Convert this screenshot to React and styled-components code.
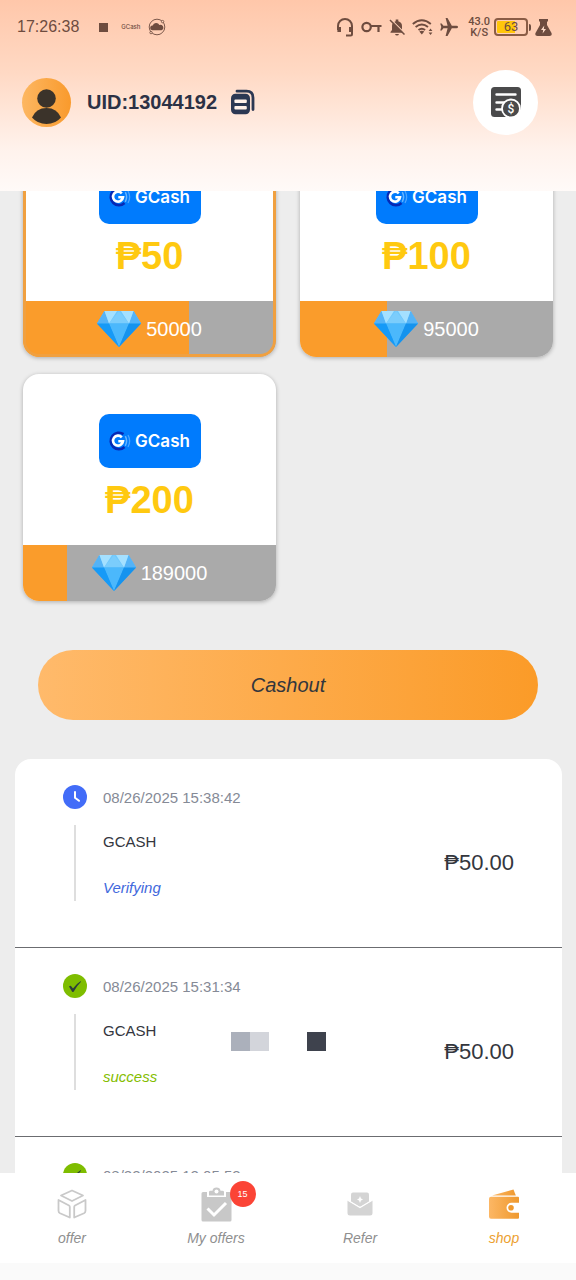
import React, { useLayoutEffect, useRef } from "react";
import styled, { createGlobalStyle, css } from "styled-components";

const GlobalStyle = createGlobalStyle`
  *, *::before, *::after { box-sizing: border-box; }
  body { margin: 0; background: #ededed; }
  button { font: inherit; color: inherit; border: 0; padding: 0; background: none; cursor: pointer; }
  svg { display: block; flex: none; }
`;

const sans = '"Liberation Sans", Arial, sans-serif';

const Screen = styled.div`
  display: flex;
  flex-direction: column;
  height: 100vh;
  font-family: ${sans};
  color: #33363d;
`;

/* ---------- header ---------- */

const Header = styled.header`
  flex: none;
  padding-bottom: 57px;
  background: linear-gradient(#ffc7aa 0%, #ffd9c4 38%, #fff2ec 78%, #fffaf8 100%);
`;

const StatusBar = styled.div`
  display: flex;
  align-items: center;
  justify-content: space-between;
  height: 54px;
  padding: 0 24px 0 17px;
  color: #6e4c3f;
`;

const StatusGroup = styled.div`
  display: flex;
  align-items: center;
  gap: ${(p) => p.$gap}px;
`;

const Clock = styled.time`
  font-size: 16px;
  line-height: 24px;
`;

const StopSquare = styled.span`
  width: 9px;
  height: 9px;
  margin: 0 5px 0 12px;
  background: #6e4c3f;
`;

const TinyLabel = styled.span`
  font: 500 6px/8px Inter, sans-serif;
`;

const Speed = styled.span`
  font: 500 11px/11px Roboto, sans-serif;
  text-align: center;
`;

const Battery = styled.span`
  display: flex;
  align-items: center;
`;

const BatteryBody = styled.span`
  width: 34px;
  height: 18px;
  border: 2px solid #8a5c45;
  border-radius: 4px;
  background: linear-gradient(90deg, #ffc60a 64%, transparent 64%);
  background-clip: content-box;
  padding: 1px;
  font: 400 13px/12px Roboto, sans-serif;
  text-align: center;
`;

const BatteryTip = styled.span`
  width: 2px;
  height: 7px;
  margin-left: 1px;
  border-radius: 0 2px 2px 0;
  background: #6e4c3f;
`;

const Account = styled.div`
  display: flex;
  align-items: center;
  height: 80px;
  padding: 16px 38px 0 22px;
`;

const Avatar = styled.span`
  width: 49px;
  height: 49px;
  border-radius: 50%;
  overflow: hidden;
  background: linear-gradient(90deg, #fdb762, #f99a2c);
`;

const Uid = styled.span`
  margin: 0 14px 0 16px;
  font-size: 20px;
  line-height: 32px;
  font-weight: 700;
  color: #2c3145;
`;

const RecordsButton = styled.button`
  display: grid;
  place-items: center;
  width: 65px;
  height: 65px;
  margin-left: auto;
  border-radius: 50%;
  background: #fff;
`;

/* ---------- scrolling content ---------- */

const Content = styled.main`
  flex: 1;
  min-height: 0;
  overflow-y: auto;
  scrollbar-width: none;
  background: #ededed;
`;

const Offers = styled.section`
  display: grid;
  grid-template-columns: 1fr 1fr;
  gap: 17px 24px;
  padding: 16px 23px 0;
`;

const OfferCard = styled.button`
  position: relative;
  display: flex;
  flex-direction: column;
  align-items: stretch;
  overflow: hidden;
  border-radius: 16px;
  background: #fff;
  box-shadow: 0 1px 4px rgba(0, 0, 0, 0.28);
  ${(p) =>
    p.$selected &&
    css`
      &::after {
        content: "";
        position: absolute;
        inset: 0;
        border: 3px solid #f0a040;
        border-radius: 16px;
      }
    `}
`;

const OfferTop = styled.span`
  display: flex;
  flex-direction: column;
  align-items: center;
  height: 171px;
  padding-top: 40px;
`;

const LogoTile = styled.span`
  display: flex;
  align-items: center;
  justify-content: center;
  gap: 4px;
  width: 102px;
  height: 54px;
  border-radius: 10px;
  background: #007bfd;
  color: #fff;
  font: 600 17px/24px Inter, sans-serif;
`;

const Price = styled.span`
  margin-top: 8px;
  font-size: 38px;
  line-height: 48px;
  font-weight: 700;
  color: #ffc910;
`;

const Meter = styled.span`
  display: flex;
  align-items: center;
  justify-content: center;
  gap: 5px;
  height: 56px;
  font-size: 20px;
  line-height: 32px;
  color: #fff;
  background: linear-gradient(90deg, #fa9c2b var(--fill), #aaaaaa var(--fill));
`;

const CashoutButton = styled.button`
  display: block;
  width: calc(100% - 76px);
  height: 70px;
  margin: 49px 38px 39px;
  border-radius: 35px;
  background: linear-gradient(90deg, #ffba6b, #fb9b28);
  font: italic 20px/24px ${sans};
  color: #33363d;
`;

const History = styled.section`
  margin: 0 14px 0 15px;
  border-radius: 16px;
  background: #fff;
`;

const Entry = styled.article`
  padding: 26px 48px 46px;
  border-bottom: 1px solid #6b6c70;
`;

const EntryHead = styled.div`
  display: flex;
  align-items: center;
  gap: 16px;
  height: 24px;
  font-size: 15px;
  color: #858a96;
`;

const EntryBody = styled.div`
  display: flex;
  align-items: stretch;
  height: 76px;
  margin: 16px 0 0 11px;
  padding-left: 27px;
  border-left: 2px solid #dedede;
`;

const EntryText = styled.div`
  display: flex;
  flex-direction: column;
  gap: 22px;
  padding-top: 5px;
  width: 128px;
`;

const Method = styled.span`
  font-size: 15px;
  line-height: 24px;
`;

const Status = styled.span`
  font: italic 15px/24px ${sans};
  color: ${(p) => (p.$done ? "#84bd00" : "#4168dc")};
`;

const Redacted = styled.span`
  display: flex;
  align-self: center;
  margin-top: -22px;
`;

const Block = styled.i`
  width: 19px;
  height: 19px;
  background: ${(p) => p.$tone};
`;

const Amount = styled.span`
  align-self: center;
  margin-left: auto;
  font-size: 22px;
  line-height: 32px;
`;

/* ---------- bottom navigation ---------- */

const Nav = styled.nav`
  flex: none;
  display: grid;
  grid-template-columns: repeat(4, 1fr);
  padding: 13px 0 17px;
  height: 107px;
  background: linear-gradient(to top, #fafafa 17px, #fff 17px);
`;

const NavItem = styled.a`
  display: flex;
  flex-direction: column;
  align-items: center;
  gap: 8px;
  text-decoration: none;
  font: italic 14px/16px ${sans};
  color: ${(p) => (p.$active ? "#eca02f" : "#8f8f8f")};
`;

const NavIcon = styled.span`
  position: relative;
  display: grid;
  place-items: center;
  height: 36px;
`;

const Badge = styled.span`
  position: absolute;
  left: 29px;
  top: -5px;
  width: 26px;
  height: 26px;
  border-radius: 50%;
  background: #fb4436;
  color: #fff;
  font: 9px/26px ${sans};
  text-align: center;
`;

/* ---------- drawings ---------- */

const CloudIcon = () => (
  <svg width="18" height="18" viewBox="0 0 18 18" fill="none" stroke="currentColor">
    <circle cx="9" cy="9" r="7.8" strokeWidth="0.9" />
    <path d="M4.2 12.2a2.3 2.3 0 0 1 .5-4.6 3.6 3.6 0 0 1 6.7-.5 2.6 2.6 0 0 1 2.2 5.1z" fill="currentColor" stroke="none" />
    <circle cx="14.6" cy="3.6" r="1.2" fill="#ffd3bb" strokeWidth="0.8" />
    <circle cx="3" cy="14.6" r="1.2" fill="#ffd3bb" strokeWidth="0.8" />
  </svg>
);

const HeadsetIcon = () => (
  <svg width="18" height="20" viewBox="0 0 18 20" fill="none" stroke="currentColor" strokeWidth="2">
    <path d="M2 13V9a7 7 0 0 1 14 0v8q0 1.500-1.500 1.500H10" />
    <path d="M3.200 10v5M14.800 10v5" strokeWidth="3.600" />
  </svg>
);

const KeyIcon = () => (
  <svg width="21" height="12" viewBox="0 0 21 12" fill="none" stroke="currentColor" strokeWidth="2.200">
    <circle cx="5.600" cy="6" r="4.200" />
    <path d="M10 5h10.500M17.500 5v6" />
  </svg>
);

const MutedBellIcon = () => (
  <svg width="16" height="18" viewBox="0 0 16 18">
    <path d="M3 8a5 5 0 0 1 3.700-4.800V1.500h2.600v1.700A5 5 0 0 1 13 8v4l1.500 2v.8h-13V14L3 12zM6 16h4q-.5 1.600-2 1.600T6 16z" fill="currentColor" />
    <path d="M1.800 1.200 15.500 15" stroke="#ffd3bb" strokeWidth="1.200" />
    <path d="m1 2 14.500 14.500" stroke="currentColor" strokeWidth="1.500" />
  </svg>
);

const WifiIcon = () => (
  <svg width="21" height="18" viewBox="0 0 21 18" fill="none" stroke="currentColor" strokeWidth="1.900">
    <path d="M.8 6q9-7.500 18 0M3.600 9q6.200-5 12.400 0M6.500 12q3.300-2.600 6.600 0" />
    <path d="m7.300 13.500 2.500 3 2.500-3q-2.500-1.500-5 0zM16.600 13l1.900-2.500 1.900 2.500zM16.600 14.500l1.900 2.500 1.900-2.500z" fill="currentColor" stroke="none" />
  </svg>
);

const PlaneIcon = () => (
  <svg width="18" height="18" viewBox="0 0 18 18" fill="currentColor">
    <path d="M18 9q0 1.200-1.500 1.200h-4.700L7.500 18H5.600l2-7.800H3.400L1.700 12.500H.2L1.300 9 .2 5.500h1.500l1.700 2.300h4.200L5.600 0h1.900l4.300 7.800h4.700Q18 7.800 18 9z" />
  </svg>
);

const FlaskIcon = () => (
  <svg width="17" height="17" viewBox="0 0 17 17">
    <path d="M4 0h9v2.500h-1V6l4.500 8q1 3-2 3h-12q-3 0-2-3L5 6V2.500H4z" fill="currentColor" />
    <path d="M9.300 6.500 6 11h2.200L7.600 14.500 11 10H8.800z" fill="#ffdcc8" />
  </svg>
);

const PersonIcon = () => (
  <svg width="49" height="49" viewBox="0 0 49 49" fill="#3b332a">
    <circle cx="24.500" cy="20.500" r="9.300" />
    <path d="M10 39.500Q14 30 24.500 30T39 39.500Q33.500 46 24.500 46T10 39.500z" />
  </svg>
);

const CopyIcon = () => (
  <svg width="24" height="26" viewBox="0 0 24 26">
    <path d="M6 2.200h9.500q6.500 0 6.500 6.500V20.500" fill="none" stroke="#2c3853" strokeWidth="2.800" strokeLinecap="round" />
    <rect x="0" y="4.800" width="19" height="20.500" rx="4.500" fill="#2c3853" />
    <rect x="3.400" y="10.500" width="12.400" height="3.400" rx="1" fill="#fff1e9" />
    <rect x="3.400" y="17" width="12.400" height="3.400" rx="1" fill="#fff1e9" />
  </svg>
);

const ReceiptIcon = () => (
  <svg width="32" height="32" viewBox="0 0 32 32">
    <rect x="1" y="1" width="30" height="30" rx="3.500" fill="#4a4a4b" />
    <path d="M6.500 8.500h19M6.500 16.500h9M6.500 23.500h6" stroke="#fff" strokeWidth="2.400" strokeLinecap="round" />
    <path d="M32 22v10H20z" fill="#fff" />
    <circle cx="21" cy="22.500" r="9" fill="#4a4a4b" stroke="#fff" strokeWidth="1.800" />
    <text x="21" y="27" textAnchor="middle" fontFamily="Roboto, sans-serif" fontSize="12" fontWeight="500" fill="#fff">$</text>
  </svg>
);

const GMark = () => (
  <svg width="22" height="20" viewBox="0 0 22 20" fill="none">
    <path d="M14.500 3.200A8.200 8.200 0 1 0 15.500 16" stroke="#0629b5" strokeWidth="2.600" />
    <path d="M12.800 6.300A5 5 0 1 0 14 10.300H9.300" stroke="#fff" strokeWidth="2.600" />
    <path d="M16.300 5.200q2.600 4.800 0 9.600" stroke="#66b5ff" strokeWidth="1.500" />
    <path d="M19 4q3.300 6 0 12" stroke="#4aa4ff" strokeWidth="1.300" />
  </svg>
);

const Diamond = () => (
  <svg width="44" height="36" viewBox="0 0 44 36">
    <path d="M7.500 0h29L44 12.500 22 36 0 12.500z" fill="#26a0f8" />
    <path d="M7.500 0h29L44 12.500H0z" fill="#70c8fc" />
    <path d="M7.500 0 0 12.500h12zM36.500 0 44 12.500H32z" fill="#54b3f7" />
    <path d="m7.500 0 4.500 12.500L20 0zM36.500 0 32 12.500 24 0z" fill="#a4e0ff" />
    <path d="M22 0 12 12.500h20z" fill="#7bcdfc" />
    <path d="M12 12.500h20L22 36z" fill="#4bb8fc" />
    <path d="M0 12.500h12L22 36z" fill="#169af7" />
    <path d="M44 12.500H32L22 36z" fill="#1593ee" />
  </svg>
);

const PendingIcon = () => (
  <svg width="24" height="24" viewBox="0 0 24 24" fill="none">
    <circle cx="12" cy="12" r="12" fill="#426cf8" />
    <path d="M12 7v5.800l4 3" stroke="#fff" strokeWidth="2" strokeLinecap="round" />
  </svg>
);

const DoneIcon = () => (
  <svg width="24" height="24" viewBox="0 0 24 24">
    <circle cx="12" cy="12" r="12" fill="#7ebd00" />
    <path d="M6 12.500q1.300-1 2-.5l2 2.500q3-4.500 7.500-7.300l.6.500Q13.500 12 10.800 17.500q-1.200 1-1.800 0z" fill="#2c3d3b" />
  </svg>
);

const CubeIcon = () => (
  <svg width="30" height="30" viewBox="0 0 30 30" fill="none" stroke="#c9c9c9" strokeWidth="1.800" strokeLinejoin="round">
    <path d="m15 1.500 11 5-11 5.500L4 6.500z" />
    <path d="m1.500 11 10.500 5.500q.8.500.8 1.500v10.500L3 24.200q-1.500-.8-1.500-2.500z" />
    <path d="M28.500 11 18 16.500q-.8.500-.8 1.500v10.500l9.800-4.300q1.500-.8 1.500-2.500z" />
  </svg>
);

const ClipboardIcon = () => (
  <svg width="31" height="35" viewBox="0 0 31 35">
    <path d="M2 5h4v5h19V5h4q1.500 0 1.500 1.500V33q0 1.500-1.500 1.500H2Q.5 34.500.5 33V6.500Q.5 5 2 5z" fill="#c8c8c8" />
    <path d="M8 8.500V5q0-1.300 1.500-1.300h2Q12 .5 15.500.5t4 3.200h2Q23 3.700 23 5v3.500z" fill="#c8c8c8" />
    <circle cx="15.500" cy="4.500" r="2" fill="#fff" />
    <path d="m6.500 21.500 6.500 6.500L25 16" fill="none" stroke="#fff" strokeWidth="3" />
  </svg>
);

const EnvelopeIcon = () => (
  <svg width="26" height="24" viewBox="0 0 26 24">
    <path d="M6 .5h14q2 0 2 2V10l-9 5-9-5V2.500q0-2 2-2z" fill="#d4d4d4" />
    <path d="m.5 8.500 12.500 7 12.500-7V21q0 2.500-2.500 2.500H3Q.5 23.500.5 21z" fill="#d4d4d4" />
    <path d="m.5 8 12.500 7.500L25.500 8" fill="none" stroke="#fff" strokeWidth="1.200" />
    <path d="m13 4 1 2.500 2 1-2 1-1 2.500-1-2.500-2-1 2-1z" fill="#fff" />
  </svg>
);

const WalletIcon = () => (
  <svg width="30" height="30" viewBox="0 0 30 30">
    <defs>
      <linearGradient id="wallet">
        <stop offset="0" stopColor="#fcb765" />
        <stop offset="1" stopColor="#ef992e" />
      </linearGradient>
    </defs>
    <path d="M3 6.500 24.500.5l2.300 6z" fill="url(#wallet)" />
    <path d="M2 7.800h27q1 0 1 1v5h-7.500a5 5 0 0 0 0 10H30v5q0 1-1 1H2q-2 0-2-2V9.800q0-2 2-2z" fill="url(#wallet)" />
    <circle cx="22" cy="18.800" r="2.800" fill="#ef992e" />
  </svg>
);

/* ---------- data ---------- */

const BALANCE = 32750;

const offers = [
  { price: 50, cost: 50000 },
  { price: 100, cost: 95000 },
  { price: 200, cost: 189000 },
];

const entries = [
  { date: "08/26/2025 15:38:42", status: "Verifying", amount: "50.00" },
  { date: "08/26/2025 15:31:34", status: "success", amount: "50.00", redacted: true },
  { date: "08/22/2025 12:05:53", status: "success", amount: "50.00" },
];

const tabs = [
  { label: "offer", icon: <CubeIcon /> },
  { label: "My offers", icon: <ClipboardIcon />, badge: 15 },
  { label: "Refer", icon: <EnvelopeIcon /> },
  { label: "shop", icon: <WalletIcon />, active: true },
];

export default function App() {
  const content = useRef(null);

  useLayoutEffect(() => {
    content.current.scrollTop = 77;
  }, []);

  return (
    <Screen>
      <GlobalStyle />
      <Header>
        <StatusBar>
          <StatusGroup $gap={8}>
            <Clock>17:26:38</Clock>
            <StopSquare />
            <TinyLabel>GCash</TinyLabel>
            <CloudIcon />
          </StatusGroup>
          <StatusGroup $gap={10}>
            <StatusGroup $gap={7}>
              <HeadsetIcon />
              <KeyIcon />
              <MutedBellIcon />
              <WifiIcon />
              <PlaneIcon />
            </StatusGroup>
            <StatusGroup $gap={4}>
              <Speed>
                43.0
                <br />
                K/S
              </Speed>
              <Battery>
                <BatteryBody>63</BatteryBody>
                <BatteryTip />
              </Battery>
              <FlaskIcon />
            </StatusGroup>
          </StatusGroup>
        </StatusBar>
        <Account>
          <Avatar>
            <PersonIcon />
          </Avatar>
          <Uid>UID:13044192</Uid>
          <button type="button" aria-label="Copy UID">
            <CopyIcon />
          </button>
          <RecordsButton type="button" aria-label="Records">
            <ReceiptIcon />
          </RecordsButton>
        </Account>
      </Header>

      <Content ref={content}>
        <Offers>
          {offers.map((o, i) => (
            <OfferCard key={o.price} type="button" $selected={i === 0}>
              <OfferTop>
                <LogoTile>
                  <GMark />
                  GCash
                </LogoTile>
                <Price>₱{o.price}</Price>
              </OfferTop>
              <Meter style={{ "--fill": `${(BALANCE / o.cost) * 100}%` }}>
                <Diamond />
                {o.cost}
              </Meter>
            </OfferCard>
          ))}
        </Offers>

        <CashoutButton type="button">Cashout</CashoutButton>

        <History>
          {entries.map((e) => (
            <Entry key={e.date}>
              <EntryHead>
                {e.status === "success" ? <DoneIcon /> : <PendingIcon />}
                <time>{e.date}</time>
              </EntryHead>
              <EntryBody>
                <EntryText>
                  <Method>GCASH</Method>
                  <Status $done={e.status === "success"}>{e.status}</Status>
                </EntryText>
                {e.redacted && (
                  <Redacted>
                    <Block $tone="#abb0bb" />
                    <Block $tone="#d3d5db" />
                    <Block $tone="transparent" />
                    <Block $tone="transparent" />
                    <Block $tone="#3e424d" />
                  </Redacted>
                )}
                <Amount>₱{e.amount}</Amount>
              </EntryBody>
            </Entry>
          ))}
        </History>
      </Content>

      <Nav>
        {tabs.map((t) => (
          <NavItem key={t.label} href="#" $active={t.active}>
            <NavIcon>
              {t.icon}
              {t.badge && <Badge>{t.badge}</Badge>}
            </NavIcon>
            {t.label}
          </NavItem>
        ))}
      </Nav>
    </Screen>
  );
}
